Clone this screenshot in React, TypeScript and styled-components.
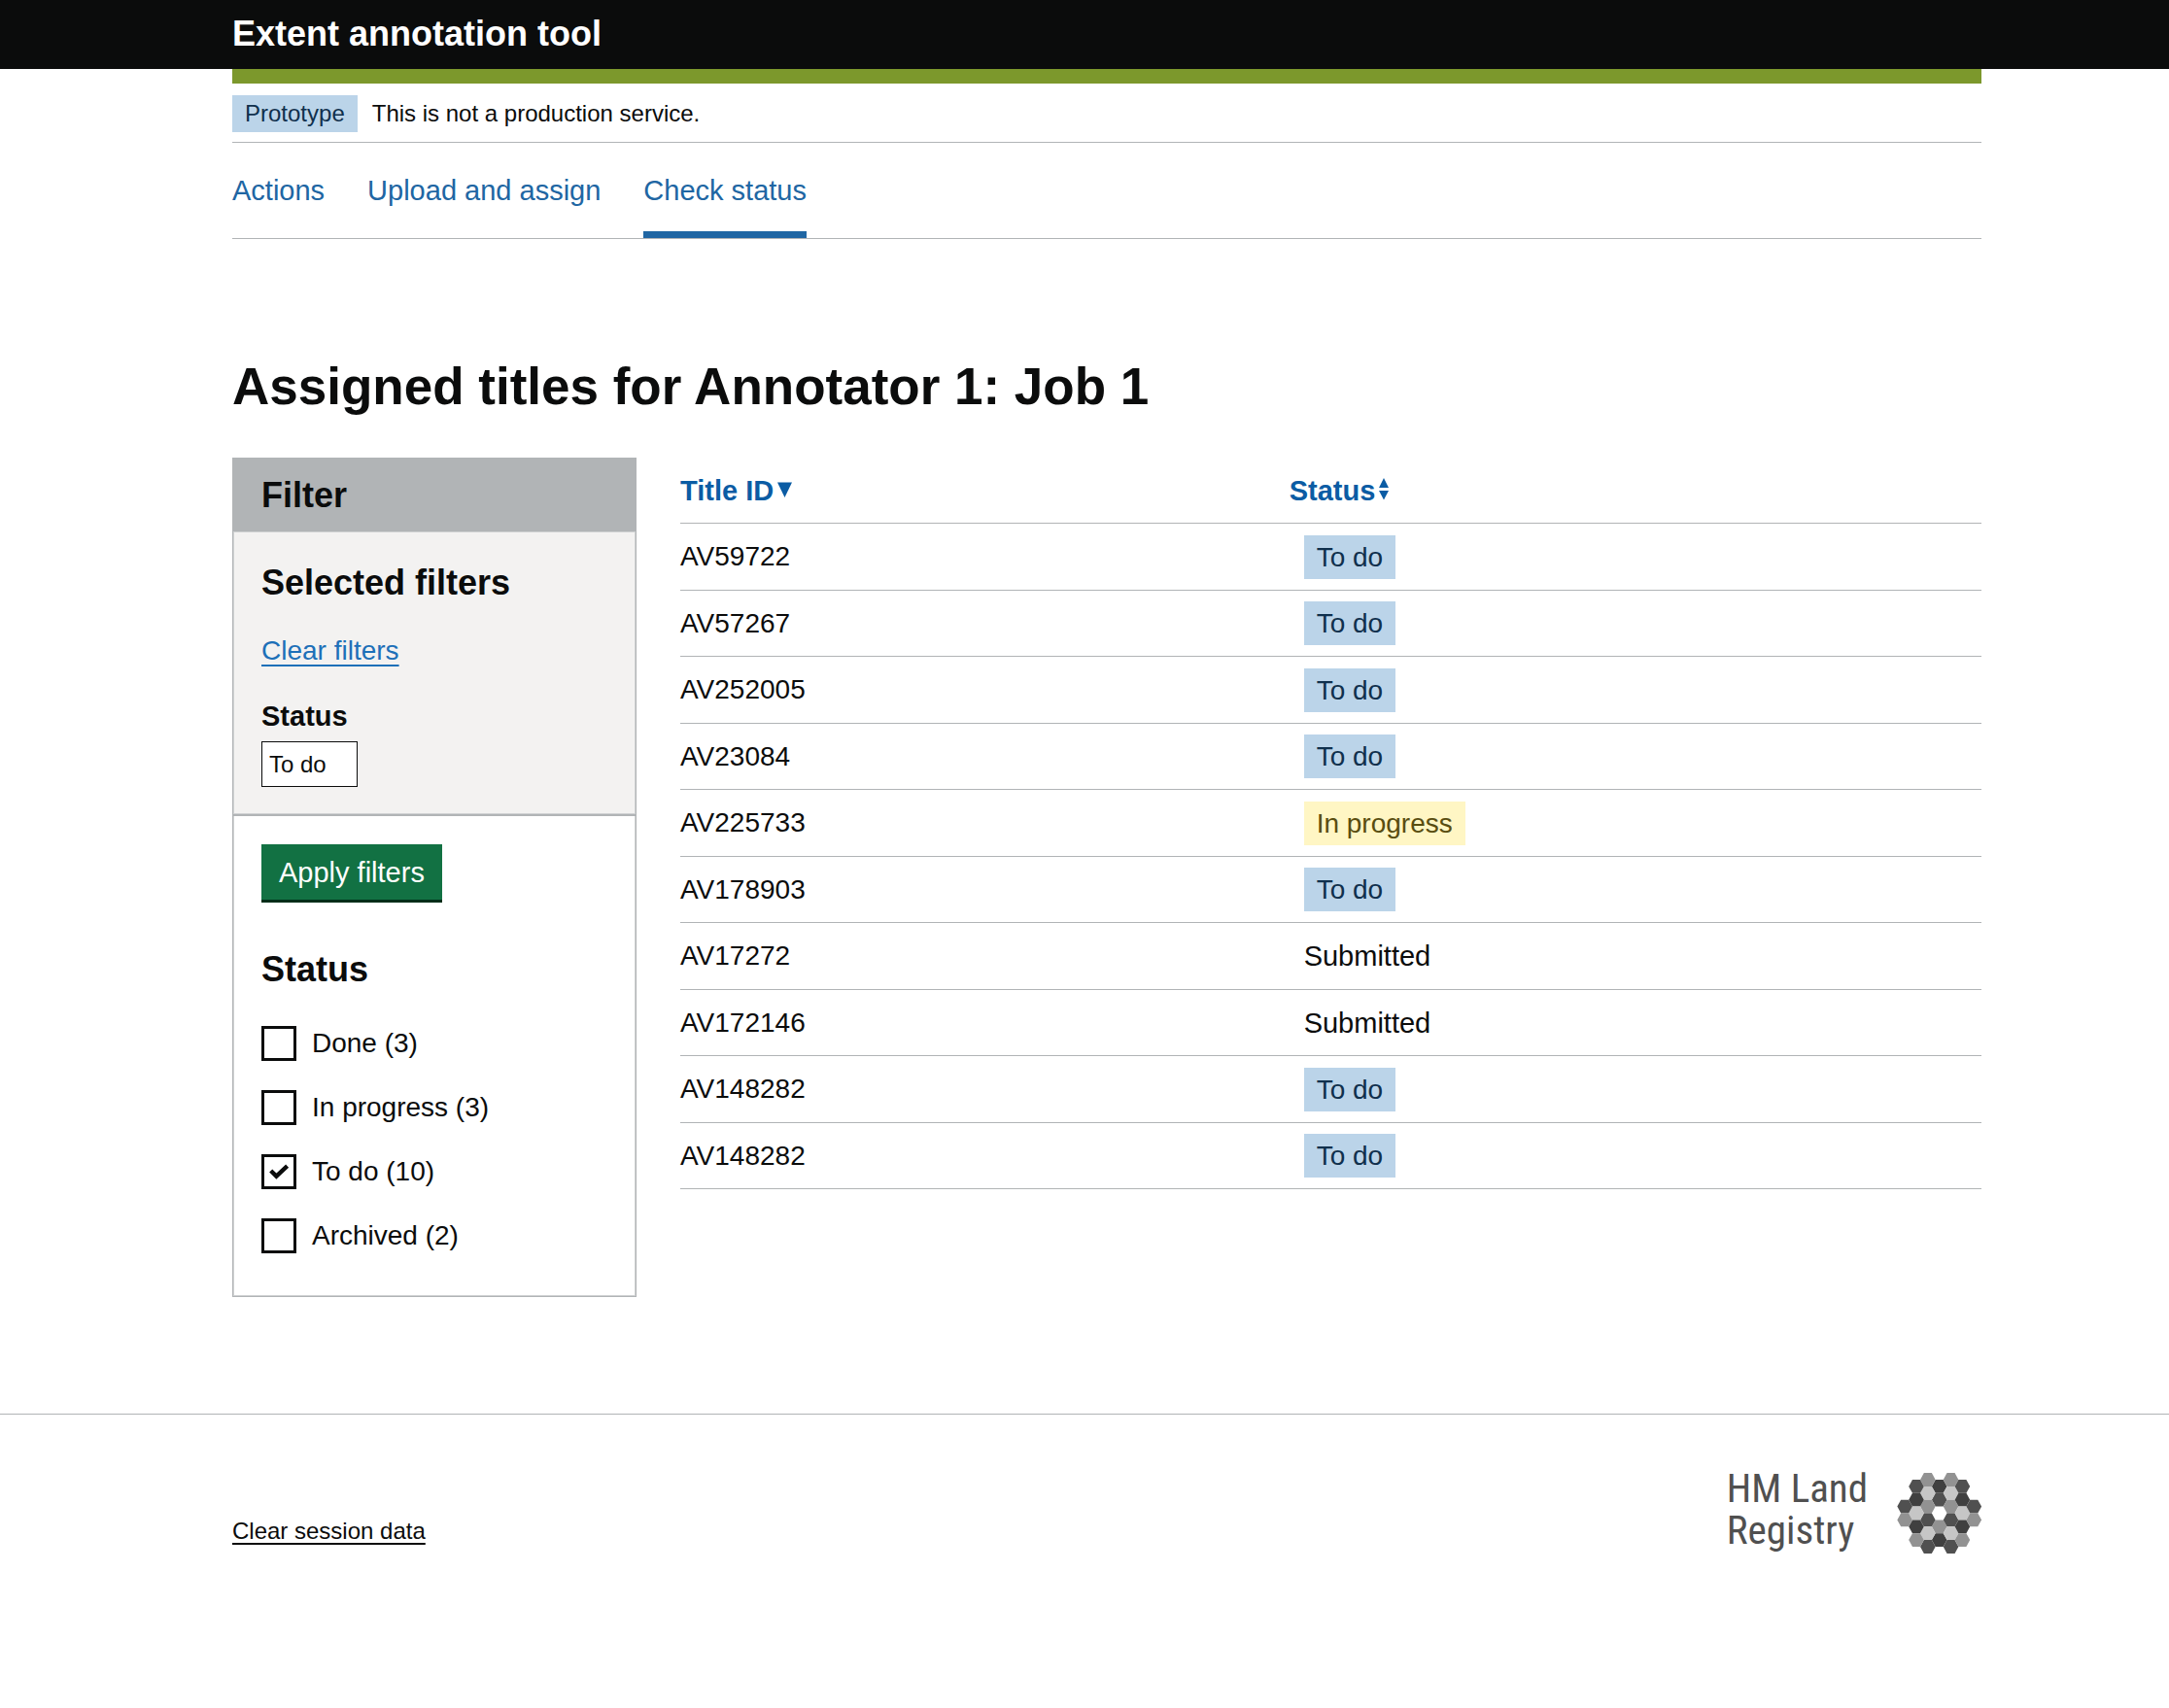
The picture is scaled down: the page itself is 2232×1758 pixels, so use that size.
import React, { useState } from "react";
import styled, { createGlobalStyle } from "styled-components";

const ink = "#0b0c0c";
const rule = "#b1b4b6";
const linkBlue = "#1d70b8";
const navBlue = "#2066a3";
const sans = `"Liberation Sans", Arial, Helvetica, sans-serif`;

const GlobalStyle = createGlobalStyle`
  *, *::before, *::after { box-sizing: border-box; }
  body {
    margin: 0;
    background: #ffffff;
    color: ${ink};
    font-family: ${sans};
    font-size: 29px;
    line-height: 36px;
  }
  h1, h2, h3, p, ul, fieldset { margin: 0; padding: 0; border: 0; }
  ul { list-style: none; }
`;

const Container = styled.div`
  padding: 0 193px 0 239px;
  @media (max-width: 1400px) {
    padding: 0 30px;
  }
`;

const Header = styled.header`
  background: ${ink};
  padding: 17px 0 18px;
`;

const ServiceName = styled.a`
  display: inline-block;
  vertical-align: top;
  color: #ffffff;
  font-size: 36px;
  font-weight: 700;
  line-height: 36px;
  text-decoration: none;
`;

const BrandBar = styled.div`
  height: 15px;
  background: #7c982c;
`;

const PhaseBanner = styled.div`
  display: flex;
  align-items: center;
  gap: 15px;
  padding: 12px 0 10px;
  border-bottom: 1px solid ${rule};
  font-size: 24px;
`;

const tones = {
  blue: { background: "#bbd4e9", text: "#10304d" },
  yellow: { background: "#fff6c4", text: "#594d10" },
};
type Tone = keyof typeof tones;

const Tag = styled.strong<{ $tone: Tone; $small?: boolean }>`
  display: inline-block;
  vertical-align: middle;
  padding: 0 13px;
  background: ${(p) => tones[p.$tone].background};
  color: ${(p) => tones[p.$tone].text};
  font-size: ${(p) => (p.$small ? 24 : 28)}px;
  font-weight: 400;
  line-height: ${(p) => (p.$small ? 38 : 45)}px;
`;

const Nav = styled.nav`
  border-bottom: 1px solid ${rule};
`;

const NavList = styled.ul`
  display: flex;
  gap: 44px;
`;

const NavLink = styled.a<{ $current?: boolean }>`
  display: block;
  padding: 31px 0 24px;
  border-bottom: 7px solid ${(p) => (p.$current ? navBlue : "transparent")};
  color: ${navBlue};
  text-decoration: none;
`;

const Main = styled.main`
  padding: 122px 0 120px;
`;

const PageTitle = styled.h1`
  margin-bottom: 43px;
  font-size: 53px;
  font-weight: 700;
  line-height: 60px;
`;

const Columns = styled.div`
  display: grid;
  grid-template-columns: 416px minmax(0, 1fr);
  gap: 45px;
  align-items: start;
`;

const FilterPanel = styled.form`
  border: 1px solid ${rule};
  box-shadow: inset 0 0 0 1px #d0d2d3;
`;

const FilterHeader = styled.div`
  padding: 20px 29px 19px;
  background: ${rule};
`;

const FilterHeading = styled.h2`
  font-size: 36px;
  font-weight: 700;
  line-height: 36px;
`;

const SelectedFilters = styled.div`
  padding: 35px 29px 28px;
  background: #f3f2f1;
  border-bottom: 2px solid ${rule};
  box-shadow: inset 0 0 0 1px #d0d2d3;
`;

const ClearLink = styled.a`
  display: table;
  margin: 34px 0 31px;
  color: ${linkBlue};
  font-size: 28px;
  text-decoration: underline 2px;
  text-underline-offset: 5px;
`;

const GroupLabel = styled.h3`
  margin-bottom: 8px;
  font-size: 29px;
  font-weight: 700;
  line-height: 36px;
`;

const FilterChip = styled.a`
  display: inline-block;
  vertical-align: top;
  padding: 0 31px 0 7px;
  border: 1px solid ${ink};
  background: #ffffff;
  color: ${ink};
  font-size: 24px;
  line-height: 45px;
  text-decoration: none;
`;

const FilterOptions = styled.div`
  padding: 29px 29px 44px;
`;

const ApplyButton = styled.button`
  display: block;
  margin: 0 0 51px;
  padding: 1px 18px 0;
  border: 0;
  border-bottom: 3px solid #002d18;
  background: #127143;
  color: #ffffff;
  font-family: inherit;
  font-size: 29px;
  line-height: 56px;
  cursor: pointer;
`;

const Legend = styled.legend`
  margin-bottom: 40px;
  padding: 0;
  font-size: 36px;
  font-weight: 700;
  line-height: 36px;
`;

const OptionList = styled.div`
  display: grid;
  gap: 30px;
`;

const Option = styled.div`
  display: flex;
  align-items: center;
  gap: 16px;
  font-size: 28px;
`;

const BoxWrap = styled.span`
  position: relative;
  width: 36px;
  height: 36px;
`;

const Box = styled.input`
  appearance: none;
  display: block;
  width: 36px;
  height: 36px;
  margin: 0;
  border: 3px solid ${ink};
  background: #ffffff;
`;

const Tick = styled.svg`
  position: absolute;
  inset: 0;
  pointer-events: none;
`;

const Table = styled.table`
  width: 100%;
  border-collapse: separate;
  border-spacing: 0;
  table-layout: fixed;
`;

const HeadCell = styled.th<{ $width?: string }>`
  width: ${(p) => p.$width ?? "auto"};
  height: 68px;
  padding: 0;
  border-bottom: 1px solid ${rule};
  text-align: left;
`;

const SortButton = styled.button`
  display: flex;
  align-items: center;
  gap: 4px;
  padding: 0;
  border: 0;
  background: none;
  color: #0b5ca4;
  font-family: inherit;
  font-size: 29px;
  font-weight: 700;
  line-height: 36px;
  cursor: pointer;
`;

const Row = styled.tr`
  height: 68px;
  &:nth-child(odd) {
    height: 69px;
  }
`;

const Cell = styled.td<{ $inset?: boolean }>`
  padding: 0 0 0 ${(p) => (p.$inset ? 15 : 0)}px;
  border-bottom: 1px solid ${rule};
  font-size: ${(p) => (p.$inset ? 29 : 28)}px;
`;

const Footer = styled.footer`
  border-top: 1px solid ${rule};
  padding: 55px 0 60px;
`;

const FooterRow = styled.div`
  display: flex;
  align-items: flex-end;
  justify-content: space-between;
`;

const SessionLink = styled.a`
  color: ${ink};
  font-size: 24px;
  line-height: 48px;
  text-decoration: underline 2px;
  text-underline-offset: 4px;
`;

const Logo = styled.div`
  display: flex;
  align-items: flex-start;
  gap: 30px;
`;

const LogoText = styled.span`
  color: #505050;
  font-family: "Roboto Condensed", "Liberation Sans Narrow", "Liberation Sans", sans-serif;
  font-size: 41px;
  font-weight: 400;
  line-height: 43px;
`;

const LogoMark = styled.svg`
  display: block;
  margin-top: 5px;
`;

const rows = [
  ["AV59722", "To do"],
  ["AV57267", "To do"],
  ["AV252005", "To do"],
  ["AV23084", "To do"],
  ["AV225733", "In progress"],
  ["AV178903", "To do"],
  ["AV17272", "Submitted"],
  ["AV172146", "Submitted"],
  ["AV148282", "To do"],
  ["AV148282", "To do"],
];

const statusTone: Record<string, Tone | undefined> = {
  "To do": "blue",
  "In progress": "yellow",
};

const options = [
  { id: "done", label: "Done (3)" },
  { id: "in-progress", label: "In progress (3)" },
  { id: "to-do", label: "To do (10)" },
  { id: "archived", label: "Archived (2)" },
];

// Hexagon columns, outwards from the middle; each is mirrored left and right.
const hexColumns = [
  { start: -2, fills: ["#404040", "#505050", "none", "#929292", "#404040"] },
  { start: -2.5, fills: ["#929292", "#c6c6c6", "#929292", "#505050", "#c6c6c6", "#505050"] },
  { start: -2, fills: ["#505050", "#404040", "#c6c6c6", "#404040", "#929292"] },
  { start: -0.5, fills: ["#505050", "#929292"] },
];

function hexPoints(cx: number, cy: number) {
  return [
    [-7.8, 0], [-4, -6.9], [4, -6.9], [7.8, 0], [4, 6.9], [-4, 6.9],
  ].map(([x, y]) => `${cx + x},${cy + y}`).join(" ");
}

function Hexagons() {
  return (
    <LogoMark width="87" height="84" viewBox="0 0 87 84" aria-hidden="true">
      {hexColumns.flatMap((column, c) =>
        (c === 0 ? [0] : [-c, c]).flatMap((side) =>
          column.fills.map((fill, i) => (
            <polygon
              key={`${side}:${i}`}
              points={hexPoints(43.7 + side * 11.85, 41.5 + (column.start + i) * 13.8)}
              fill={fill}
            />
          )),
        ),
      )}
    </LogoMark>
  );
}

export default function App() {
  const [checked, setChecked] = useState<Record<string, boolean>>({ "to-do": true });

  return (
    <>
      <GlobalStyle />
      <Header>
        <Container>
          <ServiceName href="#">Extent annotation tool</ServiceName>
        </Container>
      </Header>
      <Container>
        <BrandBar />
        <PhaseBanner>
          <Tag $tone="blue" $small>Prototype</Tag>
          <span>This is not a production service.</span>
        </PhaseBanner>
        <Nav aria-label="Primary">
          <NavList>
            <li><NavLink href="#">Actions</NavLink></li>
            <li><NavLink href="#">Upload and assign</NavLink></li>
            <li><NavLink href="#" $current aria-current="page">Check status</NavLink></li>
          </NavList>
        </Nav>
        <Main>
          <PageTitle>Assigned titles for Annotator 1: Job 1</PageTitle>
          <Columns>
            <FilterPanel onSubmit={(e) => e.preventDefault()}>
              <FilterHeader>
                <FilterHeading>Filter</FilterHeading>
              </FilterHeader>
              <SelectedFilters>
                <FilterHeading>Selected filters</FilterHeading>
                <ClearLink href="#">Clear filters</ClearLink>
                <GroupLabel>Status</GroupLabel>
                <FilterChip href="#">To do</FilterChip>
              </SelectedFilters>
              <FilterOptions>
                <ApplyButton type="submit">Apply filters</ApplyButton>
                <fieldset>
                  <Legend>Status</Legend>
                  <OptionList>
                    {options.map((o) => (
                      <Option key={o.id}>
                        <BoxWrap>
                          <Box
                            type="checkbox"
                            id={o.id}
                            checked={!!checked[o.id]}
                            onChange={(e) => setChecked({ ...checked, [o.id]: e.target.checked })}
                          />
                          {checked[o.id] && (
                            <Tick width="36" height="36" viewBox="0 0 36 36" aria-hidden="true">
                              <path d="M9.7 17 15.4 22.6 26.6 12.2" fill="none" stroke={ink} strokeWidth="4.4" />
                            </Tick>
                          )}
                        </BoxWrap>
                        <label htmlFor={o.id}>{o.label}</label>
                      </Option>
                    ))}
                  </OptionList>
                </fieldset>
              </FilterOptions>
            </FilterPanel>
            <Table>
              <thead>
                <tr>
                  <HeadCell scope="col" $width="46.8%" aria-sort="descending">
                    <SortButton type="button">
                      Title ID
                      <svg width="15" height="28" viewBox="0 0 15 28" aria-hidden="true">
                        <path d="M0 5.5H15L7.5 21Z" fill="currentColor" />
                      </svg>
                    </SortButton>
                  </HeadCell>
                  <HeadCell scope="col" aria-sort="none">
                    <SortButton type="button">
                      Status
                      <svg width="10" height="28" viewBox="0 0 10 28" aria-hidden="true">
                        <path d="M0 11H10L5 1ZM0 14H10L5 23.5Z" fill="currentColor" />
                      </svg>
                    </SortButton>
                  </HeadCell>
                </tr>
              </thead>
              <tbody>
                {rows.map(([id, status], i) => {
                  const tone = statusTone[status];
                  return (
                    <Row key={i}>
                      <Cell>{id}</Cell>
                      <Cell $inset>{tone ? <Tag $tone={tone}>{status}</Tag> : status}</Cell>
                    </Row>
                  );
                })}
              </tbody>
            </Table>
          </Columns>
        </Main>
      </Container>
      <Footer>
        <Container>
          <FooterRow>
            <SessionLink href="#">Clear session data</SessionLink>
            <Logo>
              <LogoText>HM Land<br />Registry</LogoText>
              <Hexagons />
            </Logo>
          </FooterRow>
        </Container>
      </Footer>
    </>
  );
}
